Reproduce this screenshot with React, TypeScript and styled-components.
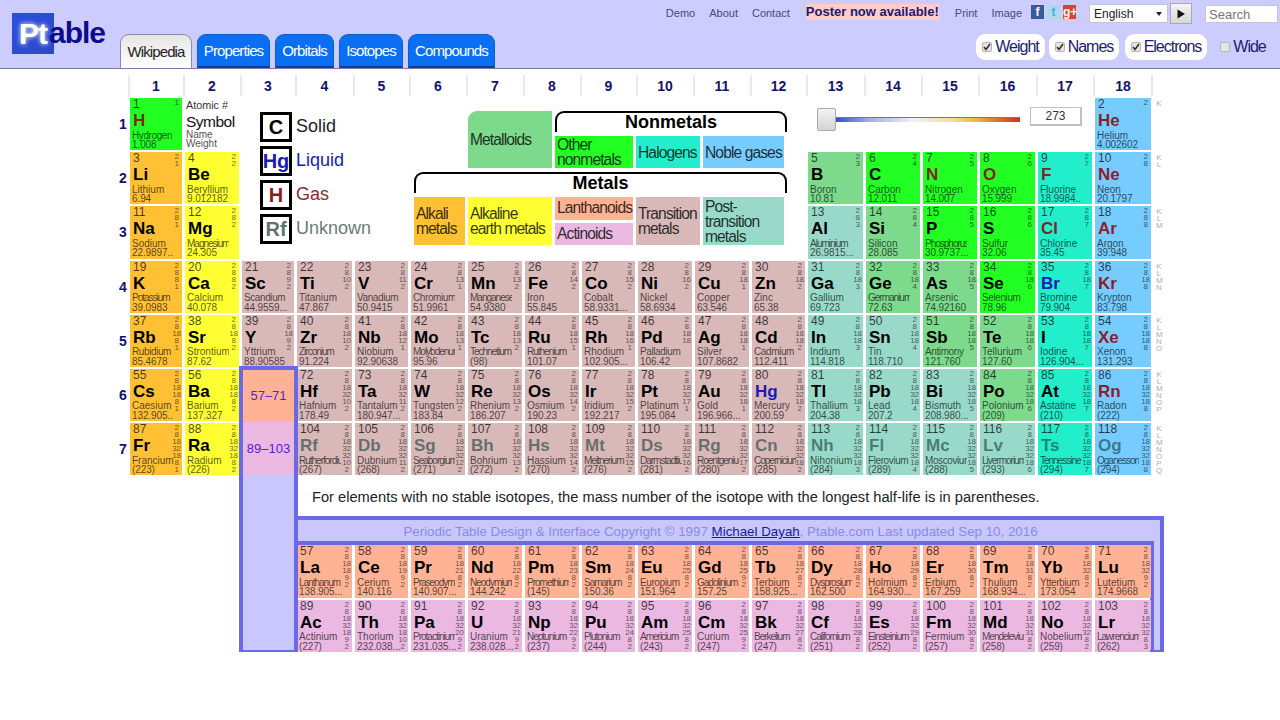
import React from "react";
import styled, { createGlobalStyle } from "styled-components";

const COLOURS: Record<string, string> = {
  a: "#ffc133",
  e: "#ffff33",
  t: "#d9b8b8",
  p: "#99d9c9",
  m: "#7dd98c",
  n: "#22ff22",
  h: "#22eecc",
  g: "#77ccff",
  l: "#ffb394",
  c: "#eab8e0",
};

const FRAME = "#6a6ae8";

const ELEMENTS = `1 H Hydrogen 1.008 1 n
2 He Helium 4.002602 2 g
3 Li Lithium 6.94 2,1 a
4 Be Beryllium 9.012182 2,2 e
5 B Boron 10.81 2,3 m
6 C Carbon 12.011 2,4 n
7 N Nitrogen 14.007 2,5 n
8 O Oxygen 15.999 2,6 n
9 F Fluorine 18.9984.. 2,7 h
10 Ne Neon 20.1797 2,8 g
11 Na Sodium 22.9897.. 2,8,1 a
12 Mg Magnesium 24.305 2,8,2 e
13 Al Aluminium 26.9815... 2,8,3 p
14 Si Silicon 28.085 2,8,4 m
15 P Phosphorus 30.9737... 2,8,5 n
16 S Sulfur 32.06 2,8,6 n
17 Cl Chlorine 35.45 2,8,7 h
18 Ar Argon 39.948 2,8,8 g
19 K Potassium 39.0983 2,8,8,1 a
20 Ca Calcium 40.078 2,8,8,2 e
21 Sc Scandium 44.9559... 2,8,9,2 t
22 Ti Titanium 47.867 2,8,10,2 t
23 V Vanadium 50.9415 2,8,11,2 t
24 Cr Chromium 51.9961 2,8,13,1 t
25 Mn Manganese 54.9380 2,8,13,2 t
26 Fe Iron 55.845 2,8,14,2 t
27 Co Cobalt 58.9331... 2,8,15,2 t
28 Ni Nickel 58.6934 2,8,16,2 t
29 Cu Copper 63.546 2,8,18,1 t
30 Zn Zinc 65.38 2,8,18,2 t
31 Ga Gallium 69.723 2,8,18,3 p
32 Ge Germanium 72.63 2,8,18,4 m
33 As Arsenic 74.92160 2,8,18,5 m
34 Se Selenium 78.96 2,8,18,6 n
35 Br Bromine 79.904 2,8,18,7 h
36 Kr Krypton 83.798 2,8,18,8 g
37 Rb Rubidium 85.4678 2,8,18,8,1 a
38 Sr Strontium 87.62 2,8,18,8,2 e
39 Y Yttrium 88.90585 2,8,18,9,2 t
40 Zr Zirconium 91.224 2,8,18,10,2 t
41 Nb Niobium 92.90638 2,8,18,12,1 t
42 Mo Molybdenum 95.96 2,8,18,13,1 t
43 Tc Technetium (98) 2,8,18,13,2 t
44 Ru Ruthenium 101.07 2,8,18,15,1 t
45 Rh Rhodium 102.905... 2,8,18,16,1 t
46 Pd Palladium 106.42 2,8,18,18 t
47 Ag Silver 107.8682 2,8,18,18,1 t
48 Cd Cadmium 112.411 2,8,18,18,2 t
49 In Indium 114.818 2,8,18,18,3 p
50 Sn Tin 118.710 2,8,18,18,4 p
51 Sb Antimony 121.760 2,8,18,18,5 m
52 Te Tellurium 127.60 2,8,18,18,6 m
53 I Iodine 126.904... 2,8,18,18,7 h
54 Xe Xenon 131.293 2,8,18,18,8 g
55 Cs Caesium 132.905.. 2,8,18,18,8,1 a
56 Ba Barium 137.327 2,8,18,18,8,2 e
57 La Lanthanum 138.905... 2,8,18,18,9,2 l
58 Ce Cerium 140.116 2,8,18,19,9,2 l
59 Pr Praseodymium 140.907... 2,8,18,21,8,2 l
60 Nd Neodymium 144.242 2,8,18,22,8,2 l
61 Pm Promethium (145) 2,8,18,23,8,2 l
62 Sm Samarium 150.36 2,8,18,24,8,2 l
63 Eu Europium 151.964 2,8,18,25,8,2 l
64 Gd Gadolinium 157.25 2,8,18,25,9,2 l
65 Tb Terbium 158.925... 2,8,18,27,8,2 l
66 Dy Dysprosium 162.500 2,8,18,28,8,2 l
67 Ho Holmium 164.930... 2,8,18,29,8,2 l
68 Er Erbium 167.259 2,8,18,30,8,2 l
69 Tm Thulium 168.934... 2,8,18,31,8,2 l
70 Yb Ytterbium 173.054 2,8,18,32,8,2 l
71 Lu Lutetium 174.9668 2,8,18,32,9,2 l
72 Hf Hafnium 178.49 2,8,18,32,10,2 t
73 Ta Tantalum 180.947... 2,8,18,32,11,2 t
74 W Tungsten 183.84 2,8,18,32,12,2 t
75 Re Rhenium 186.207 2,8,18,32,13,2 t
76 Os Osmium 190.23 2,8,18,32,14,2 t
77 Ir Iridium 192.217 2,8,18,32,15,2 t
78 Pt Platinum 195.084 2,8,18,32,17,1 t
79 Au Gold 196.966... 2,8,18,32,18,1 t
80 Hg Mercury 200.59 2,8,18,32,18,2 t
81 Tl Thallium 204.38 2,8,18,32,18,3 p
82 Pb Lead 207.2 2,8,18,32,18,4 p
83 Bi Bismuth 208.980... 2,8,18,32,18,5 p
84 Po Polonium (209) 2,8,18,32,18,6 m
85 At Astatine (210) 2,8,18,32,18,7 h
86 Rn Radon (222) 2,8,18,32,18,8 g
87 Fr Francium (223) 2,8,18,32,18,8,1 a
88 Ra Radium (226) 2,8,18,32,18,8,2 e
89 Ac Actinium (227) 2,8,18,32,18,9,2 c
90 Th Thorium 232.038... 2,8,18,32,18,10,2 c
91 Pa Protactinium 231.035... 2,8,18,32,20,9,2 c
92 U Uranium 238.028... 2,8,18,32,21,9,2 c
93 Np Neptunium (237) 2,8,18,32,22,9,2 c
94 Pu Plutonium (244) 2,8,18,32,24,8,2 c
95 Am Americium (243) 2,8,18,32,25,8,2 c
96 Cm Curium (247) 2,8,18,32,25,9,2 c
97 Bk Berkelium (247) 2,8,18,32,27,8,2 c
98 Cf Californium (251) 2,8,18,32,28,8,2 c
99 Es Einsteinium (252) 2,8,18,32,29,8,2 c
100 Fm Fermium (257) 2,8,18,32,30,8,2 c
101 Md Mendelevium (258) 2,8,18,32,31,8,2 c
102 No Nobelium (259) 2,8,18,32,32,8,2 c
103 Lr Lawrencium (262) 2,8,18,32,32,8,3 c
104 Rf Rutherfordium (267) 2,8,18,32,32,10,2 t
105 Db Dubnium (268) 2,8,18,32,32,11,2 t
106 Sg Seaborgium (271) 2,8,18,32,32,12,2 t
107 Bh Bohrium (272) 2,8,18,32,32,13,2 t
108 Hs Hassium (270) 2,8,18,32,32,14,2 t
109 Mt Meitnerium (276) 2,8,18,32,32,15,2 t
110 Ds Darmstadtium (281) 2,8,18,32,32,16,2 t
111 Rg Roentgenium (280) 2,8,18,32,32,17,2 t
112 Cn Copernicium (285) 2,8,18,32,32,18,2 t
113 Nh Nihonium (284) 2,8,18,32,32,18,3 p
114 Fl Flerovium (289) 2,8,18,32,32,18,4 p
115 Mc Moscovium (288) 2,8,18,32,32,18,5 p
116 Lv Livermorium (293) 2,8,18,32,32,18,6 p
117 Ts Tennessine (294) 2,8,18,32,32,18,7 h
118 Og Oganesson (294) 2,8,18,32,32,18,8 g`
  .split("\n")
  .map((line) => {
    const [z, symbol, name, weight, shells, cat] = line.split(" ");
    return { z: Number(z), symbol, name, weight, shells: shells.split(","), cat };
  });

const TIGHT = new Set(
  "Magnesium Aluminium Phosphorus Potassium Manganese Germanium Zirconium Molybdenum Technetium Ruthenium Lanthanum Praseodymium Neodymium Promethium Samarium Gadolinium Dysprosium Protactinium Neptunium Plutonium Americium Berkelium Californium Einsteinium Mendelevium Lawrencium Rutherfordium Seaborgium Meitnerium Darmstadtium Roentgenium Copernicium Livermorium Tennessine Oganesson".split(
    " "
  )
);
const SNUG = new Set(
  "Hydrogen Scandium Vanadium Chromium Cadmium Palladium Antimony Selenium Rubidium Europium Moscovium Flerovium Ytterbium".split(" ")
);
const GAS = new Set(["H", "He", "N", "O", "F", "Ne", "Cl", "Ar", "Kr", "Xe", "Rn"]);
const LIQUID = new Set(["Br", "Hg"]);

const stateColour = (z: number, symbol: string) => {
  if (z >= 104) return "rgba(20, 60, 60, 0.6)";
  if (LIQUID.has(symbol)) return "#1a1ab8";
  if (GAS.has(symbol)) return "rgba(140, 0, 0, 0.85)";
  return "#000";
};

const nameSpacing = (name: string) => {
  if (TIGHT.has(name)) return -1;
  if (SNUG.has(name)) return -0.4;
  return 0;
};

// [period row, group] of an element, lanthanides and actinides on rows 10 and 11
const place = (z: number): [number, number] => {
  if (z === 1) return [1, 1];
  if (z === 2) return [1, 18];
  if (z <= 4) return [2, z - 2];
  if (z <= 10) return [2, z + 8];
  if (z <= 12) return [3, z - 10];
  if (z <= 18) return [3, z];
  if (z <= 36) return [4, z - 18];
  if (z <= 54) return [5, z - 36];
  if (z <= 56) return [6, z - 54];
  if (z <= 71) return [10, z - 53];
  if (z <= 86) return [6, z - 68];
  if (z <= 88) return [7, z - 86];
  if (z <= 103) return [11, z - 85];
  return [7, z - 100];
};

const SHELL_LETTERS = ["K", "KL", "KLM", "KLMN", "KLMNO", "KLMNOP", "KLMNOPQ"];

const GlobalStyle = createGlobalStyle`
  html, body { margin: 0; background: #fff; }
  body { font-family: "Liberation Sans", Arial, sans-serif; }
  * { box-sizing: border-box; }
`;

const Header = styled.header`
  height: 69px;
  background: #ccccff;
  border-bottom: 1px solid #7a7aa6;
  display: flex;
  justify-content: space-between;
`;
const HeaderLeft = styled.div`
  display: flex;
  align-items: flex-end;
  padding-left: 12px;
`;
const Logo = styled.div`
  display: flex;
  width: 108px;
  align-self: flex-start;
  margin-top: 13px;
  font-size: 30px;
  font-weight: bold;
  line-height: 41px;
`;
const LogoSquare = styled.div`
  width: 42px;
  height: 41px;
  padding-left: 7px;
  letter-spacing: -1px;
  color: #fff;
  text-shadow: 0 0 5px #fff;
  background: linear-gradient(135deg, #2a4fe0, #2e48c4);
`;
const LogoRest = styled.div`
  margin: -1px 0 0 -5px;
  letter-spacing: -1px;
  color: #0c0c8c;
`;
const Tabs = styled.nav`
  display: flex;
  gap: 5px;
`;
const Tab = styled.div<{ $active?: boolean; $w: number }>`
  width: ${(p) => p.$w}px;
  height: 34px;
  display: flex;
  align-items: center;
  justify-content: center;
  font-size: 15px;
  letter-spacing: -0.9px;
  border-radius: 9px 9px 0 0;
  color: ${(p) => (p.$active ? "#222" : "#fff")};
  background: ${(p) => (p.$active ? "linear-gradient(#e6e6e6, #fff)" : "#0a6ff2")};
  border: 1px solid ${(p) => (p.$active ? "#8a8aa8" : "#0a5fd0")};
  border-bottom: ${(p) => (p.$active ? "none" : "2px solid #0a3f9a")};
  margin-bottom: ${(p) => (p.$active ? "-1px" : "0")};
  position: relative;
`;
const HeaderRight = styled.div`
  display: flex;
  flex-direction: column;
  align-items: flex-end;
  padding-right: 2px;
`;
const TopRow = styled.div`
  display: flex;
  align-items: flex-start;
  height: 34px;
  padding-top: 3px;
`;
const TopLink = styled.a<{ $gap: number }>`
  font-size: 11px;
  line-height: 13px;
  margin: 4px ${(p) => p.$gap}px 0 0;
  color: #414d7c;
`;
const Poster = styled.a`
  font-size: 13px;
  font-weight: bold;
  line-height: 16px;
  margin: 1px 16px 0 0;
  color: #1a1a70;
  background: #ffcccc;
`;
const Socials = styled.div`
  display: flex;
  gap: 3px;
  margin: 2px 13px 0 0;
`;
const Social = styled.span<{ $bg: string; $fg?: string }>`
  width: 13px;
  height: 14px;
  font-size: 12px;
  font-weight: bold;
  line-height: 15px;
  text-align: center;
  color: ${(p) => p.$fg ?? "#fff"};
  background: ${(p) => p.$bg};
`;
const LangWrap = styled.div`
  position: relative;
  margin: 1px 2px 0 0;
  &::after {
    content: "";
    position: absolute;
    top: 8px;
    right: 6px;
    border: 3px solid transparent;
    border-top: 4px solid #222;
    border-bottom: none;
    pointer-events: none;
  }
`;
const LangSelect = styled.select`
  display: block;
  width: 79px;
  height: 19px;
  padding: 0 0 0 4px;
  appearance: none;
  font-family: inherit;
  font-size: 12px;
  color: #222;
  background: #fff;
  border: 1px solid #c4c4d4;
  border-radius: 0;
`;
const GoButton = styled.div`
  width: 22px;
  height: 21px;
  margin-right: 13px;
  display: flex;
  align-items: center;
  justify-content: center;
  background: linear-gradient(#f4f4f4, #d8d8d8);
  border: 1px solid #aaa;
`;
const SearchBox = styled.input`
  width: 73px;
  height: 18px;
  margin-top: 2px;
  padding: 0 3px;
  font-family: inherit;
  font-size: 13px;
  border: 1px solid #c4c4d4;
  background: #fff;
  &::placeholder {
    color: #777;
  }
`;
const OptionsRow = styled.div`
  display: flex;
  align-items: center;
  gap: 4px;
  margin-right: 13px;
`;
const Option = styled.label<{ $off?: boolean; $w: number; $left?: number }>`
  height: 26px;
  width: ${(p) => p.$w}px;
  display: flex;
  align-items: center;
  justify-content: center;
  gap: 3px;
  font-size: 16px;
  letter-spacing: -1px;
  color: #1c1c6a;
  background: ${(p) => (p.$off ? "transparent" : "#fff")};
  border-radius: 9px;
  margin-left: ${(p) => p.$left ?? 0}px;
`;
const CheckBox = styled.span`
  width: 10px;
  height: 10px;
  display: flex;
  align-items: center;
  justify-content: center;
  background: #e4e4e4;
  border: 1px solid #b4b4b4;
  border-radius: 2px;
  flex: none;
`;

const Table = styled.main`
  display: grid;
  padding: 6px 0 0 119px;
  grid-template-columns: 8px 52px 54px 52px 55px 53px 54px 54px 54px 53px 54px 54px 53px 55px 54px 54px 55px 54px 56px 10px;
  grid-template-rows: 21px repeat(7, 52.2px) 39px 25px 52.2px 52.2px;
  column-gap: 3px;
  row-gap: 2px;
  justify-content: start;
`;
const GroupLabel = styled.div<{ $group: number }>`
  grid-column: ${(p) => p.$group + 1};
  grid-row: 1;
  margin-left: -2px;
  border-left: 2px solid #e8e8f4;
  display: flex;
  align-items: center;
  justify-content: center;
  font-size: 14px;
  font-weight: bold;
  color: #12126e;
`;
const LastLine = styled.div`
  grid-column: 20;
  grid-row: 1;
  margin-left: -3px;
  width: 2px;
  background: #e8e8f4;
`;
const PeriodLabel = styled.div<{ $period: number }>`
  grid-column: 1;
  grid-row: ${(p) => p.$period + 1};
  display: flex;
  align-items: center;
  justify-content: center;
  font-size: 14px;
  font-weight: bold;
  color: #12126e;
`;
const ShellLabel = styled.div<{ $period: number }>`
  grid-column: 20;
  grid-row: ${(p) => p.$period + 1};
  padding: 2px 0 0 2px;
  width: 8px;
  font-size: 8px;
  line-height: 7px;
  text-align: center;
  color: #aeaeae;
  word-break: break-all;
`;

const Cell = styled.div<{ $row: number; $group: number; $bg: string }>`
  grid-column: ${(p) => p.$group + 1};
  grid-row: ${(p) => p.$row + 1};
  display: flex;
  padding-left: 2px;
  background: ${(p) => p.$bg};
`;
const CellMain = styled.div`
  flex: 1;
  min-width: 0;
  white-space: nowrap;
`;
const Number_ = styled.div`
  font-size: 12px;
  line-height: 13px;
  margin-left: 1px;
  color: rgba(0, 0, 0, 0.72);
`;
const Symbol_ = styled.div<{ $colour: string }>`
  font-size: 17px;
  font-weight: bold;
  line-height: 20px;
  margin-left: 1px;
  color: ${(p) => p.$colour};
`;
const Name = styled.div<{ $spacing: number }>`
  width: 42px;
  overflow: hidden;
  font-size: 10px;
  line-height: 11px;
  margin-top: -1.5px;
  letter-spacing: ${(p) => p.$spacing}px;
  color: rgba(0, 0, 0, 0.68);
`;
const Weight = styled.div`
  font-size: 10px;
  line-height: 11px;
  margin-top: -1.5px;
  letter-spacing: -0.1px;
  color: rgba(0, 0, 0, 0.68);
`;
const Shells = styled.div`
  flex: none;
  width: 9px;
  margin-right: 1px;
  padding-top: 1px;
  font-size: 8px;
  line-height: 7px;
  letter-spacing: -0.3px;
  text-align: center;
  color: rgba(0, 0, 0, 0.6);
`;

const KeyCell = styled.div`
  grid-column: 3;
  grid-row: 2;
  padding: 1px 0 0 1px;
  white-space: nowrap;
`;
const KeyNumber = styled.div`
  font-size: 10.8px;
  line-height: 13px;
  color: #333;
`;
const KeySymbol = styled.div`
  font-size: 15.5px;
  line-height: 19px;
  letter-spacing: -0.5px;
  color: #111;
`;
const KeyName = styled.div`
  font-size: 10px;
  line-height: 10px;
  margin-top: -1px;
  color: #555;
`;

const Legend = styled.div`
  grid-column: 4 / 14;
  grid-row: 2 / 5;
  display: flex;
  padding: 14px 0 0 18px;
`;
const StateList = styled.div`
  width: 154px;
  display: flex;
  flex-direction: column;
  gap: 4px;
`;
const StateRow = styled.div`
  display: flex;
  align-items: center;
  gap: 4px;
`;
const StateBox = styled.div<{ $colour: string }>`
  width: 32px;
  height: 30px;
  border: 3px solid #000;
  display: flex;
  align-items: center;
  justify-content: center;
  font-size: 20px;
  font-weight: bold;
  color: ${(p) => p.$colour};
`;
const StateName = styled.div<{ $colour: string }>`
  font-size: 18px;
  line-height: 24px;
  margin-top: -2px;
  color: ${(p) => p.$colour};
`;
const Categories = styled.div`
  display: grid;
  grid-template-columns: 51px 84px 78px 64px 81px;
  grid-template-rows: 21px 32px 21px 48px;
  column-gap: 3px;
  row-gap: 4px;
  height: 134px;
  margin-top: -1px;
`;
const Bracket = styled.div<{ $column: string; $row: number }>`
  grid-column: ${(p) => p.$column};
  grid-row: ${(p) => p.$row};
  margin-right: -3px;
  border: 2px solid #000;
  border-bottom: none;
  border-radius: 9px 9px 0 0;
  text-align: center;
  font-size: 18px;
  font-weight: bold;
  line-height: 18px;
  color: #000;
`;
const Category = styled.div<{ $column: number; $row: string; $bg: string }>`
  grid-column: ${(p) => p.$column};
  grid-row: ${(p) => p.$row};
  display: flex;
  align-items: center;
  padding-left: 2px;
  font-size: 15.6px;
  letter-spacing: -0.9px;
  line-height: 15px;
  color: rgba(0, 0, 0, 0.8);
  background: ${(p) => p.$bg};
`;
const MetalloidTag = styled(Category)`
  border-radius: 9px 0 0 0;
`;
const CategoryStack = styled.div`
  grid-column: 3;
  grid-row: 4;
  display: flex;
  flex-direction: column;
  justify-content: space-between;
`;
const StackItem = styled.div<{ $bg: string }>`
  height: 22.5px;
  display: flex;
  align-items: center;
  padding-left: 2px;
  font-size: 15.6px;
  letter-spacing: -0.9px;
  color: rgba(0, 0, 0, 0.8);
  background: ${(p) => p.$bg};
`;

const SliderRow = styled.div`
  grid-column: 14 / 19;
  grid-row: 2;
  display: flex;
  align-items: flex-start;
  padding: 10px 0 0 9px;
`;
const SliderHandle = styled.div`
  width: 19px;
  height: 23px;
  flex: none;
  background: linear-gradient(#f4f4f4, #d4d4d4);
  border: 1px solid #aaa;
  border-radius: 2px;
`;
const SliderTrack = styled.div`
  width: 184px;
  height: 5px;
  margin: 9px 10px 0 0;
  background: linear-gradient(90deg, #3050c8 0%, #a0b0e8 18%, #f0f0f8 42%, #f0e0a0 62%, #e8c040 75%, #c83020 100%);
  border-top: 1px solid #777;
`;
const TempBox = styled.div`
  width: 52px;
  height: 19px;
  margin-top: -1px;
  text-align: center;
  font-size: 12px;
  line-height: 16px;
  color: #333;
  background: #fff;
  border: 1px solid #c0c0c0;
  border-width: 1px 2px 2px 1px;
`;

const BlockColumn = styled.div`
  grid-column: 4;
  grid-row: 7 / 13;
  margin: -3px -4px -2px -3px;
  border: 4px solid ${FRAME};
  display: flex;
  flex-direction: column;
  position: relative;
  z-index: 1;
  background: #c8c8ff;
`;
const BlockCell = styled.div<{ $bg: string; $h: number }>`
  height: ${(p) => p.$h}px;
  flex: none;
  display: flex;
  align-items: center;
  justify-content: center;
  font-size: 13px;
  white-space: nowrap;
  color: #5522cc;
  background: ${(p) => p.$bg};
`;
const Note = styled.div`
  grid-column: 5 / 20;
  grid-row: 9;
  display: flex;
  align-items: center;
  padding-left: 15px;
  font-size: 14.67px;
  white-space: nowrap;
  color: #222;
`;
const OuterFrame = styled.div`
  grid-column: 5 / 21;
  grid-row: 10 / 13;
  margin-top: -2px;
  padding: 4px 16px 0 0;
  border-top: 4px solid ${FRAME};
  border-right: 4px solid ${FRAME};
  background: #c8c8ff;
  text-align: center;
  font-size: 13.33px;
  color: #8a8ae8;
`;
const AuthorLink = styled.a`
  color: #1a1a99;
  text-decoration: underline;
`;
const InnerFrame = styled.div`
  grid-column: 5 / 20;
  grid-row: 11 / 13;
  margin: -4px -3px 0 0;
  border-top: 4px solid ${FRAME};
  border-right: 4px solid ${FRAME};
  background: #fff;
`;
const FrameFoot = styled.div`
  grid-column: 20;
  grid-row: 12;
  align-self: end;
  height: 4px;
  margin: 0 0 -2px -4px;
  background: ${FRAME};
`;

const TOP_LINKS: [string, number][] = [
  ["Demo", 14],
  ["About", 14],
  ["Contact", 16],
];

const TABS: [string, number][] = [
  ["Properties", 73],
  ["Orbitals", 59],
  ["Isotopes", 64],
  ["Compounds", 87],
];

const Tick = () => (
  <svg width="8" height="8" viewBox="0 0 8 8">
    <path d="M1 4 L3 6.5 L7 1" fill="none" stroke="#333" strokeWidth="1.6" />
  </svg>
);

const App: React.FC = () => {
  return (
    <>
      <GlobalStyle />
      <Header>
        <HeaderLeft>
          <Logo>
            <LogoSquare>Pt</LogoSquare>
            <LogoRest>able</LogoRest>
          </Logo>
          <Tabs>
            <Tab $active $w={72}>
              Wikipedia
            </Tab>
            {TABS.map(([text, w]) => (
              <Tab key={text} $w={w}>
                {text}
              </Tab>
            ))}
          </Tabs>
        </HeaderLeft>
        <HeaderRight>
          <TopRow>
            {TOP_LINKS.map(([text, gap]) => (
              <TopLink key={text} $gap={gap}>
                {text}
              </TopLink>
            ))}
            <Poster>Poster now available!</Poster>
            <TopLink $gap={14}>Print</TopLink>
            <TopLink $gap={9}>Image</TopLink>
            <Socials>
              <Social $bg="#3b5998">f</Social>
              <Social $bg="#a8dcec" $fg="#4aa8d8">
                t
              </Social>
              <Social $bg="#d8452e">g+</Social>
            </Socials>
            <LangWrap>
              <LangSelect defaultValue="English">
                <option>English</option>
              </LangSelect>
            </LangWrap>
            <GoButton>
              <svg width="10" height="10" viewBox="0 0 10 10">
                <path d="M1.5 0.5 L9 5 L1.5 9.5 Z" fill="#111" />
              </svg>
            </GoButton>
            <SearchBox placeholder="Search" />
          </TopRow>
          <OptionsRow>
            <Option $w={69}>
              <CheckBox>
                <Tick />
              </CheckBox>
              Weight
            </Option>
            <Option $w={70}>
              <CheckBox>
                <Tick />
              </CheckBox>
              Names
            </Option>
            <Option $w={82} $left={2}>
              <CheckBox>
                <Tick />
              </CheckBox>
              Electrons
            </Option>
            <Option $off $w={44} $left={10}>
              <CheckBox />
              Wide
            </Option>
          </OptionsRow>
        </HeaderRight>
      </Header>
      <Table>
        {Array.from({ length: 18 }, (_, i) => (
          <GroupLabel key={i} $group={i + 1}>
            {i + 1}
          </GroupLabel>
        ))}
        <LastLine />
        {SHELL_LETTERS.map((letters, i) => (
          <React.Fragment key={letters}>
            <PeriodLabel $period={i + 1}>{i + 1}</PeriodLabel>
            <ShellLabel $period={i + 1}>{letters}</ShellLabel>
          </React.Fragment>
        ))}

        <OuterFrame>
          Periodic Table Design &amp; Interface Copyright © 1997{" "}
          <AuthorLink>Michael Dayah</AuthorLink>, Ptable.com Last updated Sep 10, 2016
        </OuterFrame>
        <InnerFrame />

        {ELEMENTS.map((el) => {
          const [row, group] = place(el.z);
          return (
            <Cell key={el.z} $row={row} $group={group} $bg={COLOURS[el.cat]}>
              <CellMain>
                <Number_>{el.z}</Number_>
                <Symbol_ $colour={stateColour(el.z, el.symbol)}>{el.symbol}</Symbol_>
                <Name $spacing={nameSpacing(el.name)}>{el.name}</Name>
                <Weight>{el.weight}</Weight>
              </CellMain>
              <Shells>
                {el.shells.map((s, i) => (
                  <div key={i}>{s}</div>
                ))}
              </Shells>
            </Cell>
          );
        })}

        <KeyCell>
          <KeyNumber>Atomic #</KeyNumber>
          <KeySymbol>Symbol</KeySymbol>
          <KeyName>Name</KeyName>
          <KeyName>Weight</KeyName>
        </KeyCell>

        <Legend>
          <StateList>
            <StateRow>
              <StateBox $colour="#000">C</StateBox>
              <StateName $colour="#222">Solid</StateName>
            </StateRow>
            <StateRow>
              <StateBox $colour="#1a1ab8">Hg</StateBox>
              <StateName $colour="#1a1ab8">Liquid</StateName>
            </StateRow>
            <StateRow>
              <StateBox $colour="#8c1c1c">H</StateBox>
              <StateName $colour="#8c2c2c">Gas</StateName>
            </StateRow>
            <StateRow>
              <StateBox $colour="#5e7272">Rf</StateBox>
              <StateName $colour="#6a7a7a">Unknown</StateName>
            </StateRow>
          </StateList>
          <Categories>
            <MetalloidTag $column={2} $row="1 / 3" $bg={COLOURS.m}>
              Metalloids
            </MetalloidTag>
            <Bracket $column="3 / 6" $row={1}>
              Nonmetals
            </Bracket>
            <Category $column={3} $row="2" $bg={COLOURS.n}>
              Other
              <br />
              nonmetals
            </Category>
            <Category $column={4} $row="2" $bg={COLOURS.h}>
              Halogens
            </Category>
            <Category $column={5} $row="2" $bg={COLOURS.g}>
              Noble gases
            </Category>
            <Bracket $column="1 / 6" $row={3}>
              Metals
            </Bracket>
            <Category $column={1} $row="4" $bg={COLOURS.a}>
              Alkali
              <br />
              metals
            </Category>
            <Category $column={2} $row="4" $bg={COLOURS.e}>
              Alkaline
              <br />
              earth metals
            </Category>
            <CategoryStack>
              <StackItem $bg={COLOURS.l}>Lanthanoids</StackItem>
              <StackItem $bg={COLOURS.c}>Actinoids</StackItem>
            </CategoryStack>
            <Category $column={4} $row="4" $bg={COLOURS.t}>
              Transition
              <br />
              metals
            </Category>
            <Category $column={5} $row="4" $bg={COLOURS.p}>
              Post-
              <br />
              transition
              <br />
              metals
            </Category>
          </Categories>
        </Legend>

        <SliderRow>
          <SliderHandle />
          <SliderTrack />
          <TempBox>273</TempBox>
        </SliderRow>

        <BlockColumn>
          <BlockCell $bg={COLOURS.l} $h={52}>
            57–71
          </BlockCell>
          <BlockCell $bg={COLOURS.c} $h={53}>
            89–103
          </BlockCell>
        </BlockColumn>
        <Note>
          For elements with no stable isotopes, the mass number of the isotope with the longest
          half-life is in parentheses.
        </Note>
        <FrameFoot />
      </Table>
    </>
  );
};

export default App;
